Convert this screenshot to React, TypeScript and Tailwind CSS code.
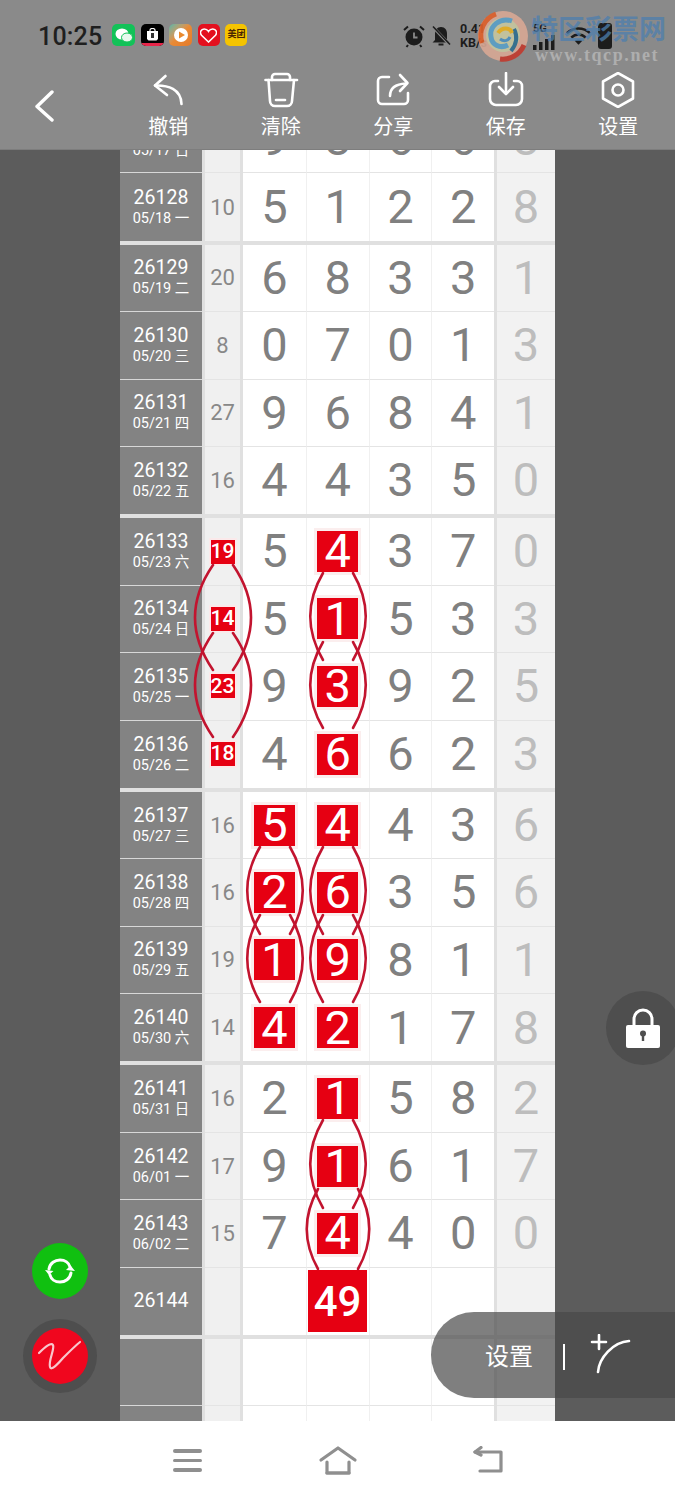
import React from "react";

type Cell = string | number | null;
type Row = { id: string; date: string; sum: Cell; sumRed?: boolean; d: Cell[]; red?: number[]; last: Cell; big?: boolean };

const groups: Row[][] = [
  [
    { id: "26127", date: "05/17 日", sum: 29, d: [9, 8, 6, 6], last: 8 },
    { id: "26128", date: "05/18 一", sum: 10, d: [5, 1, 2, 2], last: 8 },
  ],
  [
    { id: "26129", date: "05/19 二", sum: 20, d: [6, 8, 3, 3], last: 1 },
    { id: "26130", date: "05/20 三", sum: 8, d: [0, 7, 0, 1], last: 3 },
    { id: "26131", date: "05/21 四", sum: 27, d: [9, 6, 8, 4], last: 1 },
    { id: "26132", date: "05/22 五", sum: 16, d: [4, 4, 3, 5], last: 0 },
  ],
  [
    { id: "26133", date: "05/23 六", sum: 19, sumRed: true, d: [5, 4, 3, 7], red: [1], last: 0 },
    { id: "26134", date: "05/24 日", sum: 14, sumRed: true, d: [5, 1, 5, 3], red: [1], last: 3 },
    { id: "26135", date: "05/25 一", sum: 23, sumRed: true, d: [9, 3, 9, 2], red: [1], last: 5 },
    { id: "26136", date: "05/26 二", sum: 18, sumRed: true, d: [4, 6, 6, 2], red: [1], last: 3 },
  ],
  [
    { id: "26137", date: "05/27 三", sum: 16, d: [5, 4, 4, 3], red: [0, 1], last: 6 },
    { id: "26138", date: "05/28 四", sum: 16, d: [2, 6, 3, 5], red: [0, 1], last: 6 },
    { id: "26139", date: "05/29 五", sum: 19, d: [1, 9, 8, 1], red: [0, 1], last: 1 },
    { id: "26140", date: "05/30 六", sum: 14, d: [4, 2, 1, 7], red: [0, 1], last: 8 },
  ],
  [
    { id: "26141", date: "05/31 日", sum: 16, d: [2, 1, 5, 8], red: [1], last: 2 },
    { id: "26142", date: "06/01 一", sum: 17, d: [9, 1, 6, 1], red: [1], last: 7 },
    { id: "26143", date: "06/02 二", sum: 15, d: [7, 4, 4, 0], red: [1], last: 0 },
    { id: "26144", date: "", sum: null, d: [null, 49, null, null], red: [1], last: null, big: true },
  ],
  [
    { id: "", date: "", sum: null, d: [null, null, null, null], last: null },
    { id: "", date: "", sum: null, d: [null, null, null, null], last: null },
  ],
];

function TableRow({ r, isLast }: { r: Row; isLast: boolean }) {
  const line = isLast ? "" : "border-b border-[#e4e4e4]";
  return (
    <div className="flex h-[67.4px] shrink-0">
      <div className={`w-[82px] flex flex-col items-center justify-center bg-[#838383] text-white ${isLast ? "" : "border-b border-[#d8d8d8]"}`}>
        {r.id && <div className="text-[19.5px] leading-[23px] -mt-[1px]">{r.id}</div>}
        {r.date && <div className="text-[14.5px] leading-[19px] whitespace-nowrap">{r.date}</div>}
      </div>
      <div className="w-[3px] bg-[#e0e0e0]" />
      <div className={`w-[35px] flex items-center justify-center bg-[#f0f0f0] text-[22px] text-[#888888] ${line}`}>
        {r.sum !== null &&
          (r.sumRed ? (
            <div className="w-[24px] h-[24px] bg-[#e60012] text-white text-[21px] font-medium flex items-center justify-center ring-[2px] ring-[#fbe9ea]">
              {r.sum}
            </div>
          ) : (
            r.sum
          ))}
      </div>
      <div className="w-[3px] bg-[#e0e0e0]" />
      {r.d.map((v, i) => (
        <div
          key={i}
          className={`w-[62.75px] flex items-center justify-center bg-white text-[47px] font-[450] text-[#808080] ${line} ${i > 0 ? "border-l border-l-[#f0f0f0]" : ""}`}
        >
          {v !== null &&
            (r.red?.includes(i) ? (
              r.big ? (
                <div className="w-[59px] h-[62px] bg-[#e60012] text-white text-[42px] font-medium flex items-center justify-center">
                  {v}
                </div>
              ) : (
                <div className="w-[41px] h-[41px] bg-[#e60012] text-white text-[47px] font-[450] flex items-center justify-center ring-[3px] ring-[#fbeeee]">
                  {v}
                </div>
              )
            ) : (
              v
            ))}
        </div>
      ))}
      <div className="w-[3px] bg-[#e0e0e0]" />
      <div className={`w-[58px] flex items-center justify-center bg-[#f2f2f2] text-[47px] font-[450] text-[#bdbdbd] ${line}`}>
        {r.last}
      </div>
    </div>
  );
}

function lens(cx: number, y1: number, y2: number, e: number, b: number) {
  const h = (y2 - y1) / 3;
  return `M${cx - e} ${y1}C${cx - b} ${y1 + h} ${cx - b} ${y2 - h} ${cx - e} ${y2}M${cx + e} ${y1}C${cx + b} ${y1 + h} ${cx + b} ${y2 - h} ${cx + e} ${y2}`;
}

const curves = [
  lens(223, 565, 670, 10, 34),
  lens(223, 633, 737, 10, 34),
  lens(338, 573, 660, 15, 32),
  lens(338, 642, 728, 15, 32),
  lens(275, 847, 934, 15, 32),
  lens(275, 915, 1002, 15, 32),
  lens(338, 847, 934, 15, 32),
  lens(338, 915, 1002, 15, 32),
  lens(338, 1120, 1208, 15, 32),
  lens(338, 1189, 1269, 20, 35),
];

function NavItem({ label, children }: { label: string; children: React.ReactNode }) {
  return (
    <div className="w-[112.5px] flex flex-col items-center">
      <svg width="36" height="36" viewBox="0 0 36 36" fill="none" stroke="white" strokeWidth="2.6" strokeLinecap="round" strokeLinejoin="round">
        {children}
      </svg>
      <div className="text-[20px] leading-[30px] mt-[4px] text-white">{label}</div>
    </div>
  );
}

function AppIcons() {
  return (
    <div className="flex items-center gap-[5.5px] ml-[10px]">
      <div className="w-[23px] h-[22px] rounded-[5px] bg-[#12c258] flex items-center justify-center">
        <svg width="18" height="15" viewBox="0 0 18 15">
          <ellipse cx="7" cy="6" rx="6.5" ry="5.5" fill="white" />
          <ellipse cx="12" cy="9.5" rx="5.5" ry="4.5" fill="#e8f8ee" stroke="#12c258" />
        </svg>
      </div>
      <div className="w-[23px] h-[22px] rounded-[5px] bg-black flex flex-col items-center justify-end overflow-hidden">
        <svg className="mb-[2px]" width="13" height="13" viewBox="0 0 13 13">
          <path d="M1 3H12V11L10.5 12.5H2.5L1 11Z" fill="white" />
          <path d="M4 3.5V2a2.5 1.5 0 0 1 5 0V3.5" fill="none" stroke="white" strokeWidth="1.2" />
          <rect x="5" y="5" width="3" height="5" fill="#333" />
        </svg>
        <div className="w-full h-[3px] bg-[#e8264a]" />
      </div>
      <div className="w-[23px] h-[22px] rounded-[5px] bg-gradient-to-br from-[#49b4a8] via-[#e98a34] to-[#e47a2a] flex items-center justify-center">
        <svg width="16" height="16" viewBox="0 0 16 16">
          <circle cx="8" cy="8" r="7" fill="white" />
          <path d="M6 4.5L12 8L6 11.5Z" fill="#ea8a2f" />
        </svg>
      </div>
      <div className="w-[22px] h-[22px] rounded-[5px] bg-[#e3101f] flex items-center justify-center">
        <svg width="17" height="15" viewBox="0 0 17 15">
          <path d="M8.5 14L1.5 7.2C-.8 4.4 1 1 4.2 1C6 1 7.6 2 8.5 3.4C9.4 2 11 1 12.8 1C16 1 17.8 4.4 15.5 7.2Z" fill="none" stroke="white" strokeWidth="1.6" />
        </svg>
      </div>
      <div className="w-[22px] h-[22px] rounded-[5px] bg-[#f5c400] flex items-center justify-center text-[9px] font-bold text-[#4a2500] whitespace-nowrap">
        美团
      </div>
    </div>
  );
}

function StatusRight() {
  return (
    <div className="flex items-center text-[#1c1c1c] ml-auto mr-[63px] -mt-[2px]">
      <svg width="24" height="24" viewBox="0 0 24 24">
        <circle cx="12" cy="13" r="8.5" fill="#1c1c1c" />
        <path d="M12 8.5V13.5H15.5" stroke="#8a8a8a" strokeWidth="1.8" fill="none" />
        <path d="M2 6L6 2.5M22 6L18 2.5M6 21L4.5 23M18 21L19.5 23" stroke="#1c1c1c" strokeWidth="2" />
      </svg>
      <svg className="ml-[4px]" width="22" height="24" viewBox="0 0 22 24">
        <path d="M11 3C7 3 5 6 5 10V16L2.5 18.5H19.5L17 16V10C17 6 15 3 11 3Z" fill="#1c1c1c" />
        <path d="M8.5 20.5H13.5" stroke="#1c1c1c" strokeWidth="2" />
        <path d="M3 3L20 21" stroke="#8a8a8a" strokeWidth="3" />
        <path d="M3 2.5L20 20.5" stroke="#1c1c1c" strokeWidth="1.6" />
      </svg>
      <div className="ml-[8px] flex flex-col text-[12.5px] leading-[14px] font-bold w-[30px]">
        <span>0.41</span>
        <span>KB/s</span>
      </div>
      <div className="flex flex-col items-start w-[25px] ml-[43px]">
        <span className="text-[11px] leading-[12px] font-bold">5G</span>
        <svg width="25" height="15" viewBox="0 0 25 15" fill="#1c1c1c">
          <rect x="0" y="10" width="3.5" height="5" />
          <rect x="6" y="7" width="3.5" height="8" />
          <rect x="12" y="4" width="3.5" height="11" />
          <rect x="18" y="0" width="3.5" height="15" />
        </svg>
      </div>
      <svg className="ml-[7px]" width="27" height="24" viewBox="0 0 28 24" fill="none" stroke="#1c1c1c" strokeWidth="2.6">
        <path d="M2 9C9 2.5 19 2.5 26 9" />
        <path d="M6.5 13.5C11 9.5 17 9.5 21.5 13.5" />
        <path d="M14 21L10 17C12 15.5 16 15.5 18 17Z" fill="#1c1c1c" stroke="none" />
      </svg>
      <div className="ml-[6px] w-[14px] h-[26px] bg-[#1c1c1c] rounded-[3px]" />
    </div>
  );
}

function Watermark() {
  return (
    <div className="absolute z-20 left-[476px] top-[9px] w-[195px] h-[56px]">
      <svg className="absolute left-0 top-0 opacity-90" width="54" height="54" viewBox="0 0 54 54" fill="none">
        <circle cx="27" cy="27" r="25" fill="#d8a895" />
        <path d="M6 34A23 23 0 0 1 20 5" stroke="#e0602a" strokeWidth="5" />
        <path d="M24 50A23 23 0 0 0 48 36" stroke="#c23a2e" strokeWidth="5" />
        <circle cx="27" cy="26" r="17" fill="#c7c7a0" />
        <path d="M36 12C24 8 13 17 15 28C16 36 24 40 32 36" stroke="#5aa0c8" strokeWidth="5" />
        <path d="M38 20C42 28 40 36 35 42" stroke="#2f6f8f" strokeWidth="4" />
        <path d="M22 24C26 18 34 18 36 24" stroke="#e8b020" strokeWidth="4" />
        <path d="M24 30C28 33 32 32 34 28" stroke="#4a8fc0" strokeWidth="3" />
      </svg>
      <div className="absolute left-[55px] top-[5px] text-[27px] leading-[32px] font-bold text-[#4d7fae]/75 whitespace-nowrap">
        特区彩票网
      </div>
      <div className="absolute left-[59px] top-[36px] text-[18px] leading-[20px] font-bold tracking-[1.6px] text-[#aeaeae] whitespace-nowrap font-['Liberation_Serif',serif]">
        www.tqcp.net
      </div>
    </div>
  );
}

export default function App() {
  return (
    <div className="relative w-[675px] h-[1500px] overflow-hidden flex flex-col bg-white font-['Roboto','Noto_Sans_CJK_SC',sans-serif]">
      <header className="h-[150px] shrink-0 bg-[#8a8a8a] border-b border-[#7d7d7d] z-10 flex flex-col">
        <div className="h-[72px] flex items-start pt-[24px] pl-[38px]">
          <div className="text-[25px] leading-[26px] font-medium text-[#1f1f1f] tracking-[0.2px]">10:25</div>
          <AppIcons />
          <StatusRight />
        </div>
        <div className="flex items-start">
          <div className="w-[112px] pl-[34px] pt-[18px]">
            <svg width="20" height="32" viewBox="0 0 20 32" fill="none" stroke="white" strokeWidth="3.4" strokeLinecap="round" strokeLinejoin="round">
              <path d="M18 2L3 16.5L18 30" />
            </svg>
          </div>
          <NavItem label="撤销">
            <path d="M15.5 4L5 13.5L17 23" />
            <path d="M5 13.5C18 13 31 17 31.5 32" />
          </NavItem>
          <NavItem label="清除">
            <path d="M2.5 8H34" />
            <path d="M9 8V5a3 3 0 0 1 3-3H24a3 3 0 0 1 3 3V8" />
            <path d="M5.5 8L7 29a5 5 0 0 0 5 5H24a5 5 0 0 0 5-5L31 8" />
            <path d="M13 28H22" />
          </NavItem>
          <NavItem label="分享">
            <path d="M14 5H7a4 4 0 0 0-4 4V28a4 4 0 0 0 4 4H29a4 4 0 0 0 4-4V21" />
            <path d="M15 24C15 16 20 12 31 11.5" />
            <path d="M25 3L32.5 11L25 19" />
          </NavItem>
          <NavItem label="保存">
            <path d="M10 9H7a5 5 0 0 0-5 5V27a6 6 0 0 0 6 6H28a6 6 0 0 0 6-6V14a5 5 0 0 0-5-5H26" />
            <path d="M18 1V21" />
            <path d="M11 15L18 22L25 15" />
          </NavItem>
          <NavItem label="设置">
            <path d="M18 1L33 9.5V26.5L18 35L3 26.5V9.5Z" />
            <circle cx="18" cy="18" r="5.5" />
          </NavItem>
        </div>
      </header>

      <main className="h-[1271px] shrink-0 bg-[#5c5c5c] pl-[120px] overflow-hidden">
        <div className="w-[435px] -mt-[44px]">
          {groups.map((g, i) => (
            <div key={i} className="border-b-[4px] border-[#e0e0e0]">
              {g.map((r, j) => (
                <TableRow key={j} r={r} isLast={j === g.length - 1} />
              ))}
            </div>
          ))}
        </div>
      </main>

      <nav className="flex-1 bg-white flex items-center">
        <div className="ml-[173px] w-[29px] flex flex-col gap-[6px]">
          <div className="h-[3.5px] rounded-full bg-[#8f8f8f]" />
          <div className="h-[3.5px] rounded-full bg-[#8f8f8f]" />
          <div className="h-[3.5px] rounded-full bg-[#8f8f8f]" />
        </div>
        <svg className="ml-[116px]" width="40" height="32" viewBox="0 0 40 32" fill="none" stroke="#8f8f8f" strokeWidth="3.2" strokeLinecap="round" strokeLinejoin="round">
          <path d="M3 15L20 3L37 15" />
          <path d="M9 17V28H31V17" />
          <path d="M9 28H31" />
        </svg>
        <svg className="ml-[114px]" width="32" height="30" viewBox="0 0 32 30" fill="none" stroke="#8f8f8f" strokeWidth="3.2" strokeLinecap="round" strokeLinejoin="round">
          <path d="M3 6H29V25H8" />
          <path d="M9 1.5L3 6L9 9" />
        </svg>
      </nav>

      <svg className="absolute left-0 top-0 pointer-events-none" width="675" height="1500" viewBox="0 0 675 1500" fill="none" stroke="#c2142f" strokeWidth="2.6" strokeLinecap="round">
        {curves.map((d, i) => (
          <path key={i} d={d} />
        ))}
      </svg>

      <Watermark />

      <div className="absolute left-[606px] top-[991px] w-[74px] h-[74px] rounded-full bg-[#4e4e4e] flex items-center justify-center">
        <svg width="36" height="42" viewBox="0 0 36 42">
          <path d="M9 19V12a9 9 0 0 1 18 0V19" fill="none" stroke="white" strokeWidth="3" />
          <rect x="1" y="18" width="34" height="23" rx="2" fill="white" />
          <circle cx="18" cy="26.5" r="3" fill="#4e4e4e" />
          <rect x="16.8" y="27" width="2.4" height="7" fill="#4e4e4e" />
        </svg>
      </div>

      <div className="absolute left-[32px] top-[1243px] w-[56px] h-[56px] rounded-full bg-[#10c010] flex items-center justify-center">
        <svg width="32" height="30" viewBox="0 0 32 30" fill="none" stroke="white" strokeWidth="3" strokeLinecap="round">
          <path d="M5 13C6 7 11 4 16 4C21 4 25 7 26 11" />
          <path d="M27 17C26 23 21 26 16 26C11 26 7 23 6 19" />
          <path d="M1 14L5 19L9.5 15Z" fill="white" stroke="none" />
          <path d="M22 14L26.5 9.5L31 15Z" fill="white" stroke="none" />
        </svg>
      </div>

      <div className="absolute left-[23px] top-[1319px] w-[74px] h-[74px] rounded-full bg-[#4e4e4e] flex items-center justify-center">
        <div className="w-[56px] h-[56px] rounded-full bg-[#f0061e] flex items-center justify-center">
          <svg width="46" height="34" viewBox="0 0 46 34" fill="none" stroke="#f8c6cc" strokeWidth="2.2" strokeLinecap="round" strokeLinejoin="round">
            <path d="M2 14C8 8 14 3 16 6C18 10 11 22 13 28C14 32 20 26 26 19C32 13 38 7 43 3" />
          </svg>
        </div>
      </div>

      <div className="absolute left-[431px] top-[1312px] w-[244px] h-[86px] rounded-l-[43px] bg-[#484848]/70 flex items-center">
        <span className="ml-[54px] mt-[4px] text-[24px] text-white">设置</span>
        <div className="ml-[30px] mt-[4px] w-[2px] h-[26px] bg-white" />
        <svg className="ml-[24px]" width="42" height="42" viewBox="0 0 42 42" fill="none" stroke="white" strokeWidth="2.6" strokeLinecap="round">
          <path d="M10 1V15M3 8H17" />
          <path d="M9 38C10 24 24 8 40 7" />
        </svg>
      </div>
    </div>
  );
}
